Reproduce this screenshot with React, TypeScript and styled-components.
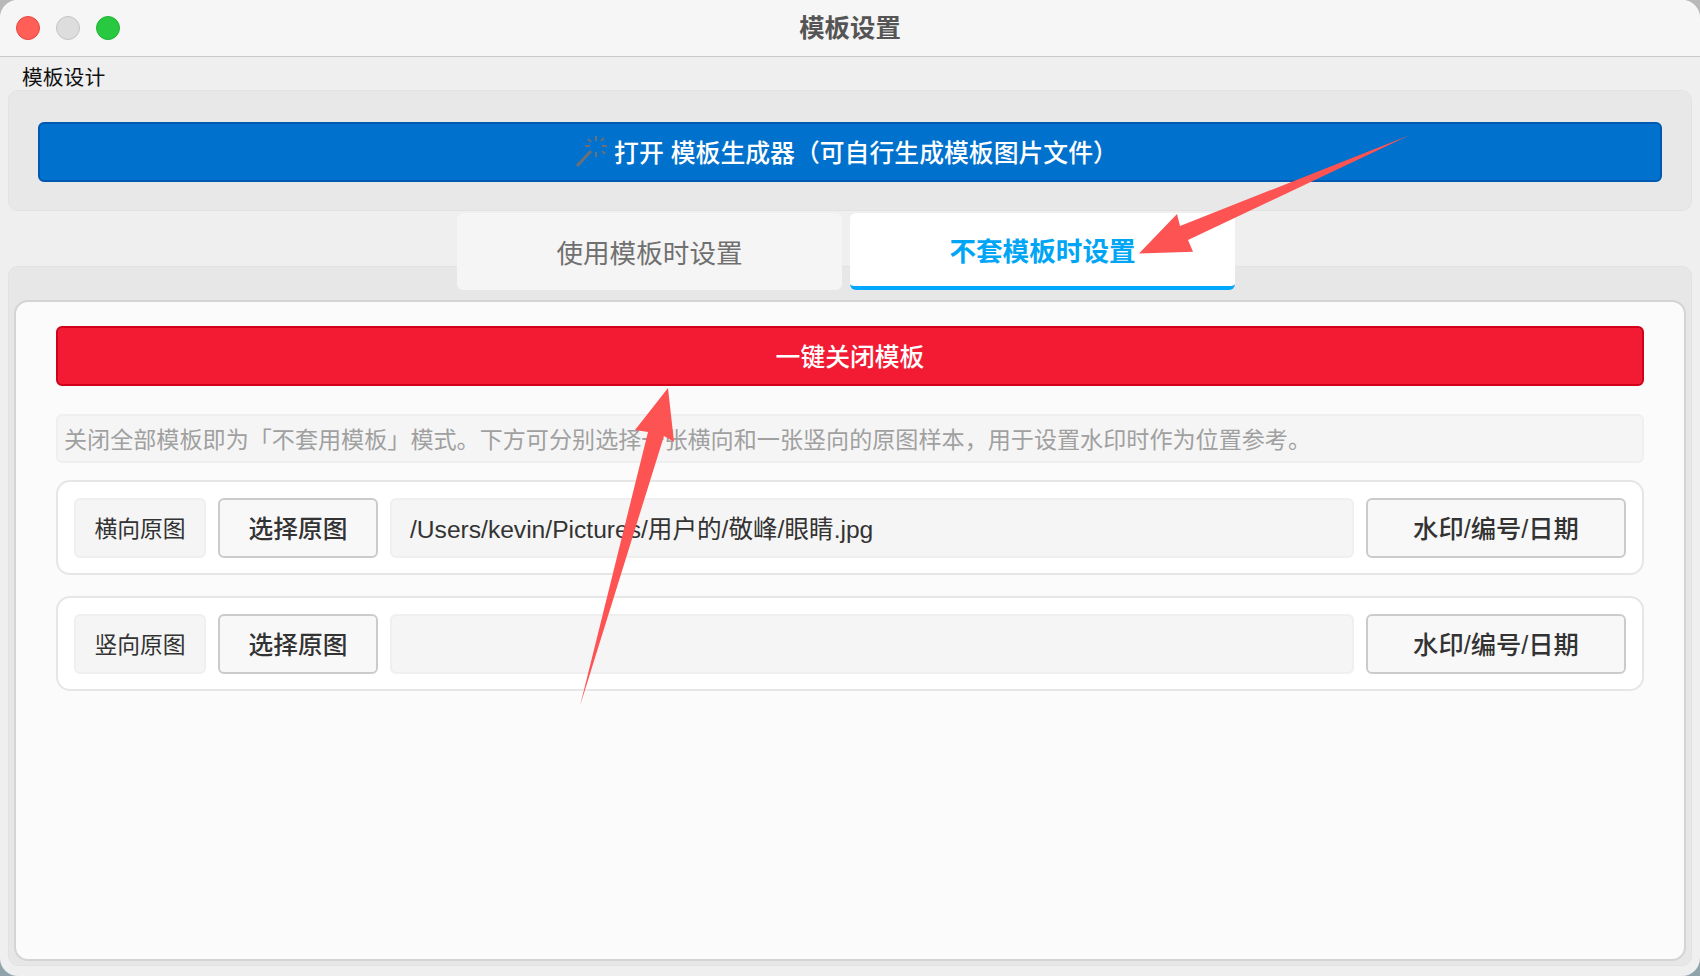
import React from "react";
import styled, { createGlobalStyle } from "styled-components";

const GlobalStyle = createGlobalStyle`
  html, body { margin: 0; padding: 0; background: #8fa4aa; }
  #root { width: 1700px; height: 976px; }
  * { box-sizing: border-box; }
`;

const FONT = `"Liberation Sans", "Noto Sans CJK SC", sans-serif`;

const Desktop = styled.div`
  position: relative;
  width: 1700px;
  height: 976px;
  overflow: hidden;
  font-family: ${FONT};
  background: linear-gradient(#b9b9b9, #8fa4aa);
`;

const Window = styled.div`
  width: 1700px;
  height: 976px;
  background: #efefef;
  border-radius: 18px;
  overflow: hidden;
  display: flex;
  flex-direction: column;
`;

const TitleBar = styled.header`
  position: relative;
  flex: none;
  height: 57px;
  display: flex;
  align-items: center;
  justify-content: center;
  padding-bottom: 4px;
  background: #f6f6f6;
  border-bottom: 1px solid #c9c9c9;
  font-size: 25.4px;
  font-weight: 600;
  color: #555555;
`;

const Lights = styled.div`
  position: absolute;
  left: 16px;
  top: 16px;
  display: flex;
  gap: 16px;
`;

const Light = styled.span<{ $bg: string; $edge: string }>`
  width: 24px;
  height: 24px;
  border-radius: 50%;
  background: ${(p) => p.$bg};
  border: 1px solid ${(p) => p.$edge};
`;

const Body = styled.main`
  flex: 1;
  display: flex;
  flex-direction: column;
  padding: 10px 8px 10px;
  min-height: 0;
`;

const GroupLabel = styled.div`
  height: 23px;
  line-height: 21px;
  padding-left: 14px;
  font-size: 20.8px;
  color: #111111;
`;

const GroupBox = styled.section`
  flex: none;
  height: 121px;
  padding: 31px 29px 29px;
  background: #e8e8e8;
  border: 1px solid #e2e2e2;
  border-radius: 10px;
`;

const PrimaryButton = styled.button<{ $bg: string; $edge: string; $size: number; $lift: number; $shift: number }>`
  width: 100%;
  height: 60px;
  display: flex;
  align-items: center;
  justify-content: center;
  gap: 6px;
  padding: 0 ${(p) => p.$shift}px ${(p) => p.$lift}px 0;
  background: ${(p) => p.$bg};
  border: 2px solid ${(p) => p.$edge};
  border-radius: 6px;
  color: #ffffff;
  font-family: ${FONT};
  font-size: ${(p) => p.$size}px;
  font-weight: 500;
`;

const TabBar = styled.nav`
  position: relative;
  z-index: 1;
  flex: none;
  height: 78px;
  margin-top: 2px;
  margin-bottom: -25px;
  display: flex;
  justify-content: center;
  gap: 8px;
  padding-right: 8px;
`;

const Tab = styled.div<{ $active?: boolean }>`
  width: 385px;
  height: 77px;
  display: flex;
  align-items: center;
  justify-content: center;
  border-radius: 6px;
  font-size: 26.6px;
  background: ${(p) => (p.$active ? "#ffffff" : "#f5f5f5")};
  color: ${(p) => (p.$active ? "#00a6f5" : "#707070")};
  font-weight: ${(p) => (p.$active ? 600 : 400)};
  border-bottom: ${(p) => (p.$active ? "4px solid #00a8fb" : "0")};
`;

const TabPane = styled.section`
  flex: 1;
  min-height: 0;
  padding: 33px 5px 4px;
  background: #e7e7e7;
  border: 1px solid #e2e2e2;
  border-radius: 10px;
  display: flex;
`;

const Panel = styled.div`
  flex: 1;
  padding: 24px 40px;
  display: flex;
  flex-direction: column;
  background: #fbfbfb;
  border: 2px solid #d4d4d4;
  border-radius: 14px;
`;

const Hint = styled.div`
  height: 49px;
  margin-top: 28px;
  margin-bottom: 17px;
  display: flex;
  align-items: center;
  padding: 0 0 2px 6px;
  background: #f5f5f5;
  border: 2px solid #efefef;
  border-radius: 6px;
  color: #a0a0a0;
  font-size: 23.1px;
  white-space: nowrap;
`;

const Row = styled.div`
  height: 95px;
  margin-bottom: 21px;
  display: flex;
  align-items: center;
  gap: 12px;
  padding: 0 16px;
  background: #ffffff;
  border: 2px solid #e6e6e6;
  border-radius: 14px;
`;

const FieldLabel = styled.div`
  flex: none;
  width: 132px;
  height: 60px;
  display: flex;
  align-items: center;
  justify-content: center;
  background: #f5f5f5;
  border: 2px solid #efefef;
  border-radius: 6px;
  color: #333333;
  font-size: 22.8px;
`;

const Button = styled.button<{ $w: number; $size: number }>`
  flex: none;
  width: ${(p) => p.$w}px;
  height: 60px;
  padding: 0 0 2px;
  background: #f8f8f8;
  border: 2px solid #cbcbcb;
  border-radius: 6px;
  color: #333333;
  font-family: ${FONT};
  font-size: ${(p) => p.$size}px;
  font-weight: 500;
`;

const PathField = styled.div`
  flex: 1;
  height: 60px;
  display: flex;
  align-items: center;
  padding: 0 0 2px 18px;
  background: #f5f5f5;
  border: 2px solid #efefef;
  border-radius: 6px;
  color: #333333;
  font-size: 24.6px;
`;

const Overlay = styled.svg`
  position: absolute;
  z-index: 2;
  left: 0;
  top: 0;
  pointer-events: none;
`;

const Wand = () => (
  <svg width="32" height="32" viewBox="0 0 32 32" fill="none" stroke="#6b7076" strokeWidth="2">
    <path d="M1 31 L15 16" strokeWidth="3" />
    <path d="M20 1v5M20 17v5M9 11h5M26 11h5M12 4l3 3M28 3l-3 3M26 16l3 3" />
  </svg>
);

export default function App() {
  const rows = [
    { label: "横向原图", path: "/Users/kevin/Pictures/用户的/敬峰/眼睛.jpg" },
    { label: "竖向原图", path: "" },
  ];
  return (
    <Desktop>
      <GlobalStyle />
      <Window>
        <TitleBar>
          <Lights>
            <Light $bg="#ff5f57" $edge="#e5483f" />
            <Light $bg="#dddddd" $edge="#c4c4c4" />
            <Light $bg="#28c840" $edge="#20b234" />
          </Lights>
          模板设置
        </TitleBar>
        <Body>
          <GroupLabel>模板设计</GroupLabel>
          <GroupBox>
            <PrimaryButton $bg="#0071cc" $edge="#0058b0" $size={24.85} $lift={2} $shift={6}>
              <Wand />
              打开 模板生成器（可自行生成模板图片文件）
            </PrimaryButton>
          </GroupBox>
          <TabBar>
            <Tab>使用模板时设置</Tab>
            <Tab $active>不套模板时设置</Tab>
          </TabBar>
          <TabPane>
            <Panel>
              <PrimaryButton $bg="#f31b34" $edge="#d0001a" $size={24.8} $lift={2} $shift={0}>
                一键关闭模板
              </PrimaryButton>
              <Hint>
                关闭全部模板即为「不套用模板」模式。下方可分别选择一张横向和一张竖向的原图样本，用于设置水印时作为位置参考。
              </Hint>
              {rows.map((r) => (
                <Row key={r.label}>
                  <FieldLabel>{r.label}</FieldLabel>
                  <Button $w={160} $size={24.7}>选择原图</Button>
                  <PathField>{r.path}</PathField>
                  <Button $w={260} $size={25.3}>水印/编号/日期</Button>
                </Row>
              ))}
            </Panel>
          </TabPane>
        </Body>
      </Window>
      <Overlay width="1700" height="976" viewBox="0 0 1700 976">
        <path d="M1410 135 L1180 226 L1177 214 L1139 253.5 L1193 251.7 L1188 240 Z" fill="#fd5353" />
        <path d="M580 706 L648 432 L635 430 L668 388 L674 442 L664 436 Z" fill="#fd5353" />
      </Overlay>
    </Desktop>
  );
}
